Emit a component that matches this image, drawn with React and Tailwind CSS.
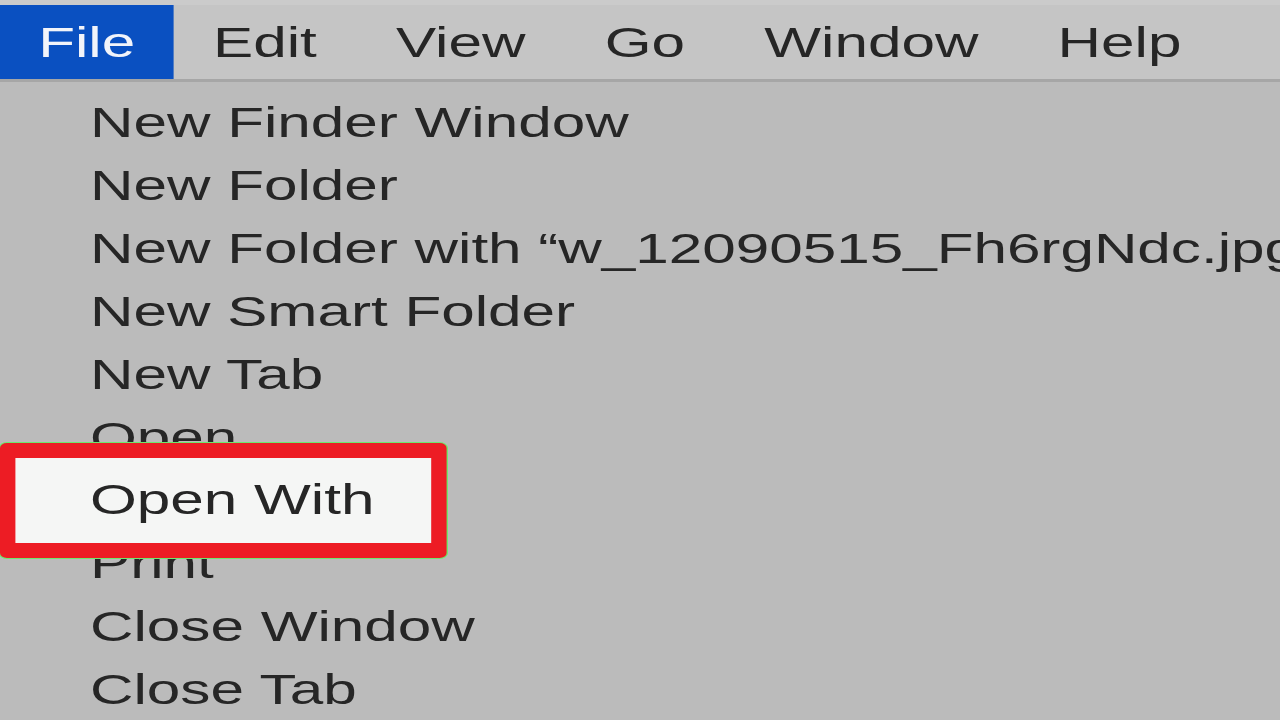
const menuBar = ["File", "Edit", "View", "Go", "Window", "Help"];

const items = [
  "New Finder Window",
  "New Folder",
  "New Folder with \u201Cw_12090515_Fh6rgNdc.jpg\u201D",
  "New Smart Folder",
  "New Tab",
  "Open",
  "Open With",
  "Print",
  "Close Window",
  "Close Tab",
];

export default function App() {
  return (
    <div
      className="w-[1280px] h-[720px] overflow-hidden bg-[#bbbbbb] text-[#262626]"
      style={{ fontFamily: '"Liberation Sans", Arial, sans-serif' }}
    >
      {/* the screenshot is stretched sideways, so the whole page is */}
      <div className="relative w-[915px] origin-top-left scale-x-[1.4]">
        <div className="h-[5px] bg-[#cbcbcb]" />
        <div className="flex h-[74px] bg-[#c5c5c5] text-[43px] leading-[74px]">
          {menuBar.map((label, i) => (
            <div
              key={label}
              className={
                i === 0
                  ? "px-[27.3px] bg-[#0a50c1] text-[#f2f4fa]"
                  : "px-[28.3px]"
              }
            >
              {label}
            </div>
          ))}
        </div>
        <div className="h-[3px] bg-[#a6a6a6]" />

        <div className="pt-[9px] text-[43px] leading-[63px]">
          {items.map((label) => (
            <div key={label} className="h-[63px] pl-[64.3px] whitespace-nowrap">
              {label}
            </div>
          ))}
        </div>

        <div className="absolute left-0 top-[443px] w-[319px] h-[115px] rounded-[5px] border-x-[11px] border-y-[15px] border-[#ed1c24] bg-[#f5f6f5] shadow-[0_0_0_1px_#6ee86e] text-[43px] leading-[63px]">
          <div className="pt-[10px] pl-[53.3px] whitespace-nowrap">Open With</div>
        </div>
      </div>
    </div>
  );
}
